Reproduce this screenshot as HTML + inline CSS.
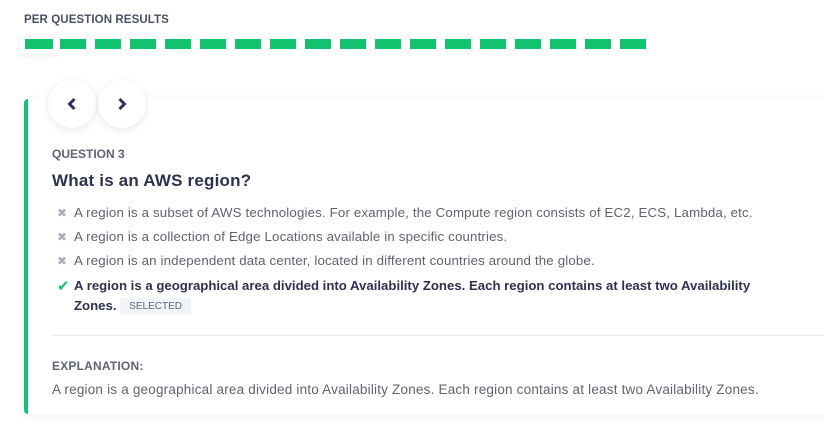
<!DOCTYPE html>
<html><head><style>
body{margin:0;width:824px;height:436px;background:#fff;font-family:"Liberation Sans",sans-serif;position:relative;overflow:hidden}
.hdr{position:absolute;left:24px;top:14px;font-size:11.5px;font-weight:bold;color:#4a4f63;letter-spacing:.1px}
.dash{position:absolute;top:39px;width:26px;height:10px;background:#13c26f}
.first{position:absolute;left:20px;top:36px;width:38px;height:18px;background:#fff;box-shadow:0 2px 5px rgba(0,0,0,.08)}
.card{position:absolute;left:24px;top:99px;width:820px;height:315px;background:#fff;border-left:4px solid #13c26f;border-radius:4px;box-shadow:0 2px 10px rgba(0,0,0,.06)}
.btn{position:absolute;top:80px;width:48px;height:48px;border-radius:50%;background:#fff;box-shadow:0 2px 8px rgba(0,0,0,.1)}
.btn svg{position:absolute;left:17px;top:16px}
.t{position:absolute;left:52px;color:#5f6372;font-size:13.5px;white-space:nowrap;letter-spacing:.15px}
.ic{position:absolute;left:57px;font-size:12px;color:#aab0bb}
</style></head><body>
<div class="hdr">PER QUESTION RESULTS</div>
<div class="first"></div>
<div id="d"></div>
<div class="card"></div>
<div class="btn" style="left:48px"><svg width="14" height="16"><path d="M9.5 3 L4.5 8 L9.5 13" stroke="#2d2f55" stroke-width="3" fill="none"/></svg></div>
<div class="btn" style="left:98px"><svg width="14" height="16"><path d="M4.5 3 L9.5 8 L4.5 13" stroke="#2d2f55" stroke-width="3" fill="none"/></svg></div>
<div class="t" style="top:147px;font-size:12px;font-weight:bold;letter-spacing:0">QUESTION 3</div>
<div class="t" style="top:171px;font-size:17px;font-weight:bold;color:#2f3150;letter-spacing:.2px">What is an AWS region?</div>
<div class="ic" style="top:206px">✖</div><div class="t" style="left:74px;top:205px;letter-spacing:.15px;font-size:13.3px">A region is a subset of AWS technologies. For example, the Compute region consists of EC2, ECS, Lambda, etc.</div>
<div class="ic" style="top:230px">✖</div><div class="t" style="left:74px;top:229px;letter-spacing:.15px;font-size:13.3px">A region is a collection of Edge Locations available in specific countries.</div>
<div class="ic" style="top:254px">✖</div><div class="t" style="left:74px;top:253px;letter-spacing:.15px;font-size:13.3px">A region is an independent data center, located in different countries around the globe.</div>
<div class="ic" style="top:277px;color:#13c26f;font-size:15px">✔</div>
<div class="t" style="left:74px;top:276px;font-weight:bold;color:#2f3150;line-height:20px;letter-spacing:0;font-size:13.2px">A region is a geographical area divided into Availability Zones. Each region contains at least two Availability<br>Zones. <span style="display:inline-block;font-weight:normal;font-size:10px;color:#5f6372;background:#f1f4f8;padding:0 9px;line-height:17px;vertical-align:1px;letter-spacing:0">SELECTED</span></div>
<div style="position:absolute;left:52px;top:335px;width:772px;height:1px;background:#e8eaee"></div>
<div class="t" style="top:359px;font-size:12px;font-weight:bold;letter-spacing:.2px">EXPLANATION:</div>
<div class="t" style="top:382px;letter-spacing:.2px">A region is a geographical area divided into Availability Zones. Each region contains at least two Availability Zones.</div>
<script>
var h='';for(var i=0;i<18;i++){h+='<div class="dash" style="left:'+(25+i*35)+'px;width:'+(i==0?28:26)+'px"></div>';}document.getElementById('d').innerHTML=h;
</script>
</body></html>
